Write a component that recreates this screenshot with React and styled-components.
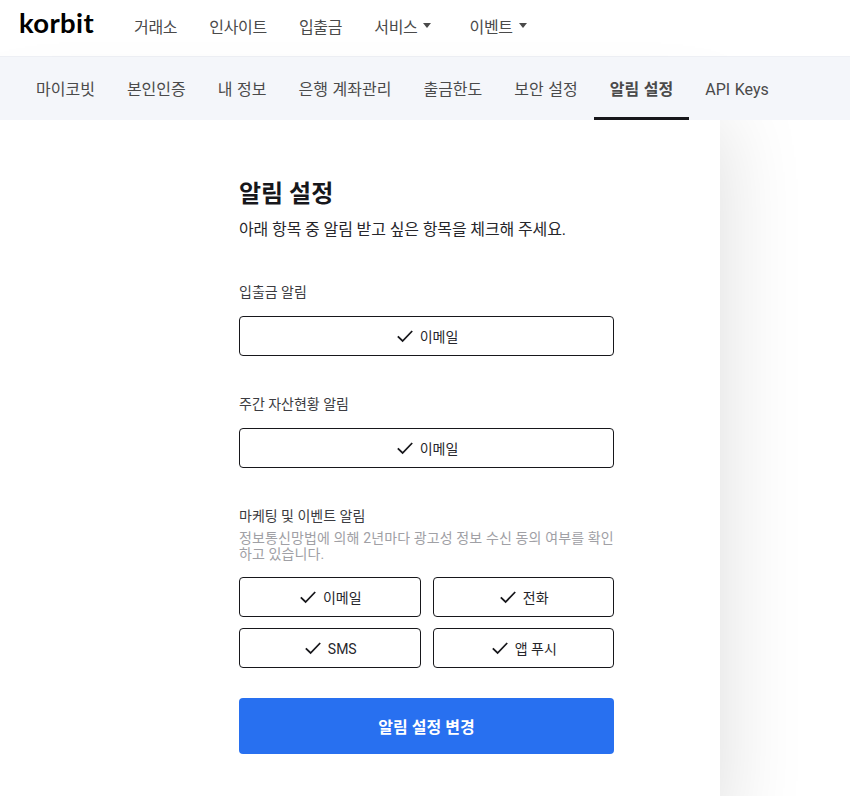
import React from "react";
import styled, { createGlobalStyle } from "styled-components";

const Global = createGlobalStyle`
  html, body { margin: 0; padding: 0; background: #fff; }
  body { font-family: Roboto, "Noto Sans CJK KR", sans-serif; }
  * { box-sizing: border-box; }
`;

const Page = styled.div`
  width: 850px;
  height: 796px;
  overflow: hidden;
`;

const TopBar = styled.header`
  height: 57px;
  display: flex;
  align-items: center;
  padding-left: 19px;
  background: #fff;
  border-bottom: 1px solid #eef0f5;
`;

const Logo = styled.div`
  width: 115px;
  font-family: Lato, sans-serif;
  font-weight: 700;
  font-size: 27.5px;
  line-height: 32px;
  color: #000;
  margin-top: -11px;
  letter-spacing: 0.35px;
`;

const MainNav = styled.nav`
  display: flex;
  align-items: center;
`;

const MainLink = styled.span`
  display: flex;
  align-items: center;
  font-size: 16px;
  letter-spacing: -0.3px;
  color: #4a4a4a;
  margin-right: ${(p) => (p.$caret ? 38 : 32)}px;
  margin-top: -5px;
  white-space: nowrap;
`;

const Caret = styled.i`
  display: block;
  width: 0;
  height: 0;
  margin-left: 6px;
  border-left: 4px solid transparent;
  border-right: 4px solid transparent;
  border-top: 5px solid #4a4a4a;
  margin-top: -1px;
`;

const SubBar = styled.nav`
  position: relative;
  z-index: 1;
  height: 63px;
  display: flex;
  padding-left: 20px;
  background: #f4f6fa;
`;

const Tab = styled.a`
  display: flex;
  align-items: center;
  padding: ${(p) => (p.$latin ? "5px" : "1px")} 16px 0;
  font-size: 16px;
  word-spacing: 0.6px;
  white-space: nowrap;
  color: #4a4a4a;
  font-weight: ${(p) => (p.$active ? 700 : 400)};
  border-bottom: 3px solid ${(p) => (p.$active ? "#17171b" : "transparent")};
`;

const Panel = styled.main`
  width: 720px;
  min-height: 720px;
  padding: 57px 0 0 239px;
  background: #fff;
  box-shadow: 0 0 80px rgba(0, 0, 0, 0.14);
`;

const Form = styled.div`
  width: 375px;
`;

const Title = styled.h1`
  margin: 0;
  font-size: 24px;
  line-height: 34px;
  font-weight: 700;
  color: #17171b;
`;

const Lead = styled.p`
  margin: 7px 0 0;
  font-size: 16px;
  line-height: 24px;
  letter-spacing: -0.12px;
  color: #26262b;
`;

const Section = styled.section`
  margin-top: ${(p) => p.$top}px;
`;

const Label = styled.div`
  font-size: 14px;
  line-height: 20px;
  color: #3c3c41;
`;

const Help = styled.p`
  margin: 4px 0 0;
  font-size: 14px;
  line-height: 16px;
  letter-spacing: 0.12px;
  color: #a0a0a5;
`;

const Grid = styled.div`
  display: grid;
  grid-template-columns: ${(p) => (p.$cols === 2 ? "1fr 1fr" : "1fr")};
  gap: 11px 12px;
  margin-top: ${(p) => p.$top}px;
`;

const Option = styled.button`
  height: 40px;
  display: flex;
  align-items: center;
  justify-content: center;
  gap: 7px;
  padding: 0 0 0 2px;
  background: #fff;
  border: 1px solid #17171b;
  border-radius: 4px;
  font-family: inherit;
  font-size: 14px;
  color: #26262b;
`;

const OptionText = styled.span`
  padding-top: ${(p) => (p.$latin ? 2 : 0)}px;
`;

const Submit = styled.button`
  display: block;
  width: 100%;
  height: 56px;
  margin-top: 30px;
  border: 0;
  border-radius: 4px;
  background: #2870f0;
  color: #fff;
  font-family: inherit;
  font-size: 16px;
  font-weight: 700;
`;

const Check = () => (
  <svg width="16" height="16" viewBox="0 0 16 16" fill="none" stroke="#17171b" strokeWidth="1.8">
    <path d="M0.8 8.4 L5.6 13 L15.2 3" />
  </svg>
);

const Opt = ({ children, latin }) => (
  <Option type="button">
    <Check />
    <OptionText $latin={latin}>{children}</OptionText>
  </Option>
);

export default function App() {
  return (
    <Page>
      <Global />
      <TopBar>
        <Logo>korbit</Logo>
        <MainNav>
          <MainLink>거래소</MainLink>
          <MainLink>인사이트</MainLink>
          <MainLink>입출금</MainLink>
          <MainLink $caret>서비스<Caret /></MainLink>
          <MainLink $caret>이벤트<Caret /></MainLink>
        </MainNav>
      </TopBar>
      <SubBar>
        <Tab>마이코빗</Tab>
        <Tab>본인인증</Tab>
        <Tab>내 정보</Tab>
        <Tab>은행 계좌관리</Tab>
        <Tab>출금한도</Tab>
        <Tab>보안 설정</Tab>
        <Tab $active>알림 설정</Tab>
        <Tab $latin>API Keys</Tab>
      </SubBar>
      <Panel>
        <Form>
          <Title>알림 설정</Title>
          <Lead>아래 항목 중 알림 받고 싶은 항목을 체크해 주세요.</Lead>
          <Section $top={40}>
            <Label>입출금 알림</Label>
            <Grid $top={14}><Opt>이메일</Opt></Grid>
          </Section>
          <Section $top={38}>
            <Label>주간 자산현황 알림</Label>
            <Grid $top={14}><Opt>이메일</Opt></Grid>
          </Section>
          <Section $top={38}>
            <Label>마케팅 및 이벤트 알림</Label>
            <Help>정보통신망법에 의해 2년마다 광고성 정보 수신 동의 여부를 확인하고 있습니다.</Help>
            <Grid $cols={2} $top={15}>
              <Opt>이메일</Opt>
              <Opt>전화</Opt>
              <Opt latin>SMS</Opt>
              <Opt>앱 푸시</Opt>
            </Grid>
          </Section>
          <Submit type="button">알림 설정 변경</Submit>
        </Form>
      </Panel>
    </Page>
  );
}
